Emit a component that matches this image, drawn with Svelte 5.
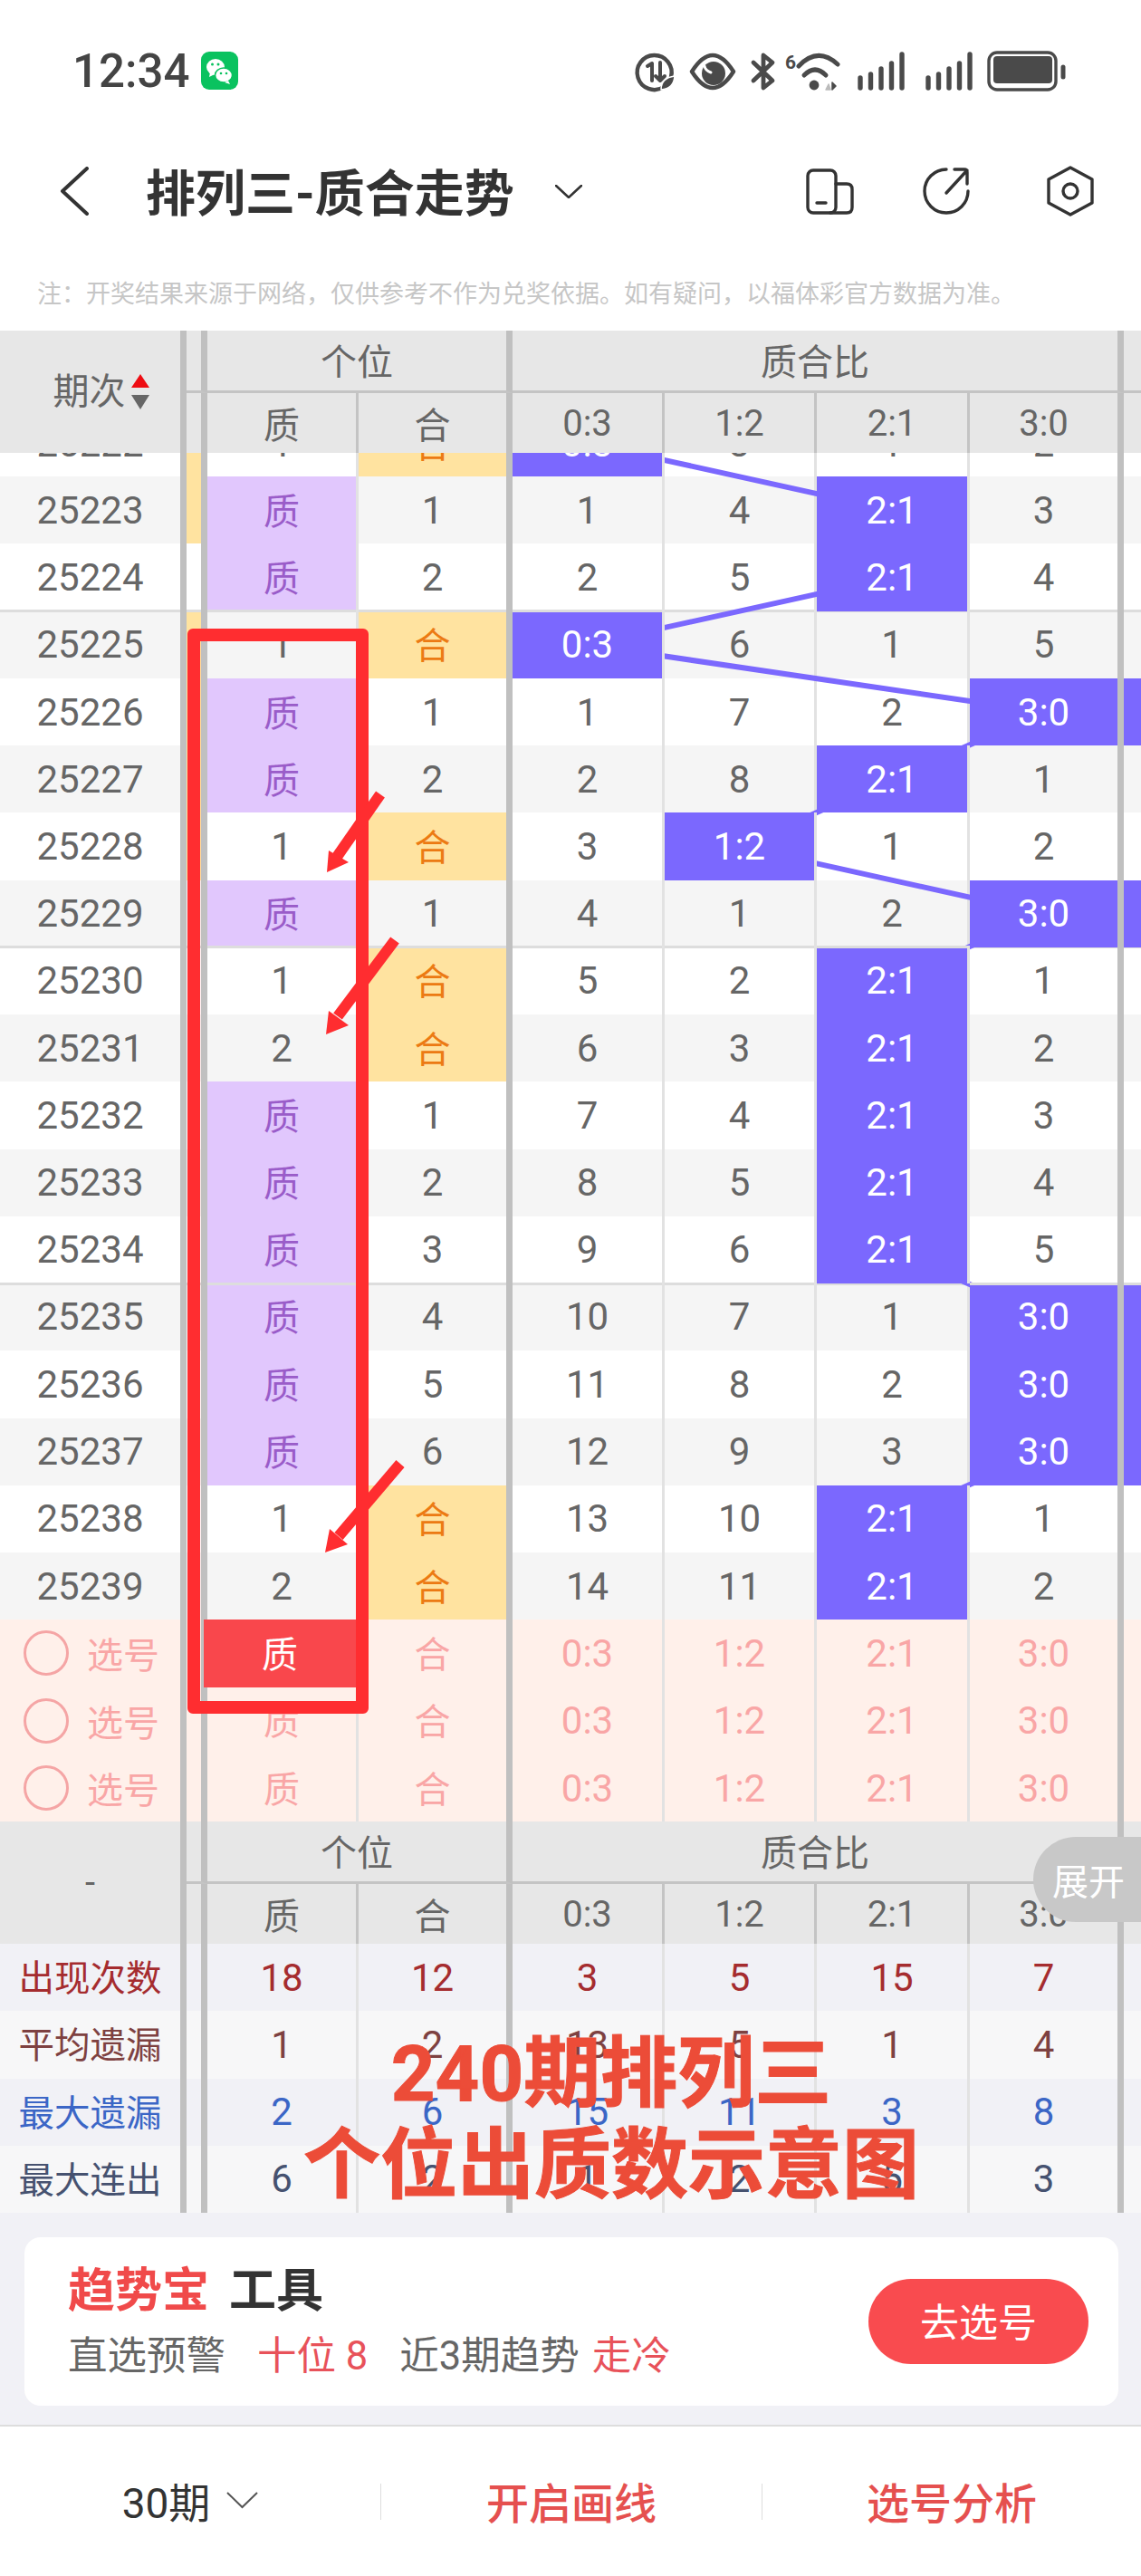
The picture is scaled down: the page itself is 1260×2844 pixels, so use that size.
<script>
  const CX = [648, 817, 985, 1153];
  const ROW_H = 74.24;

  // period, 质 value, 合 value, ratio slots; hot = index of the drawn ratio
  const rows = [
    { p: 25222, v: '1', hit: 'he', r: [0, 3, 1, 2], hot: 0, side: true },
    { p: 25223, v: '1', hit: 'zhi', r: [1, 4, 0, 3], hot: 2, side: true },
    { p: 25224, v: '2', hit: 'zhi', r: [2, 5, 0, 4], hot: 2 },
    { p: 25225, v: '1', hit: 'he', r: [0, 6, 1, 5], hot: 0, side: true, sep: true },
    { p: 25226, v: '1', hit: 'zhi', r: [1, 7, 2, 0], hot: 3, side: true },
    { p: 25227, v: '2', hit: 'zhi', r: [2, 8, 0, 1], hot: 2, side: true },
    { p: 25228, v: '1', hit: 'he', r: [3, 0, 1, 2], hot: 1, side: true },
    { p: 25229, v: '1', hit: 'zhi', r: [4, 1, 2, 0], hot: 3 },
    { p: 25230, v: '1', hit: 'he', r: [5, 2, 0, 1], hot: 2, sep: true },
    { p: 25231, v: '2', hit: 'he', r: [6, 3, 0, 2], hot: 2 },
    { p: 25232, v: '1', hit: 'zhi', r: [7, 4, 0, 3], hot: 2 },
    { p: 25233, v: '2', hit: 'zhi', r: [8, 5, 0, 4], hot: 2 },
    { p: 25234, v: '3', hit: 'zhi', r: [9, 6, 0, 5], hot: 2 },
    { p: 25235, v: '4', hit: 'zhi', r: [10, 7, 1, 0], hot: 3, sep: true },
    { p: 25236, v: '5', hit: 'zhi', r: [11, 8, 2, 0], hot: 3 },
    { p: 25237, v: '6', hit: 'zhi', r: [12, 9, 3, 0], hot: 3 },
    { p: 25238, v: '1', hit: 'he', r: [13, 10, 0, 1], hot: 2 },
    { p: 25239, v: '2', hit: 'he', r: [14, 11, 0, 2], hot: 2 }
  ];

  const ratios = ['0:3', '1:2', '2:1', '3:0'];

  const stats = [
    { label: '出现次数', cls: 's-red', vals: [18, 12, 3, 5, 15, 7] },
    { label: '平均遗漏', cls: 's-brown', vals: [1, 2, 13, 5, 1, 4] },
    { label: '最大遗漏', cls: 's-blue', vals: [2, 6, 15, 11, 3, 8] },
    { label: '最大连出', cls: 's-navy', vals: [6, 2, 1, 2, 5, 3] }
  ];

  // trend line through the hot cells, body top sits at y=500 and row 0 at -48
  const trend = rows
    .map((row, i) => `${CX[row.hot]},${-48 + ROW_H * (i + 0.5)}`)
    .join(' ');
</script>

{#snippet head(corner)}
  <div class="head">
    <div class="h-corner">{@render corner()}</div>
    <div class="h-side"></div>
    <div class="h-group g2"><span>个位</span></div>
    <div class="h-group g4"><span>质合比</span></div>
    <div class="h-end"></div>
    <div class="h-low"></div>
    <div class="h-cell thin">质</div>
    <div class="h-cell thick">合</div>
    {#each ratios as label, i}
      <div class="h-cell" class:thin={i < 3} class:thick={i === 3}>{label}</div>
    {/each}
    <div class="h-cell"></div>
  </div>
{/snippet}

{#snippet sortCorner()}
  <span class="corner-text">期次</span>
  <svg class="sort" width="20" height="40" viewBox="0 0 20 40">
    <polygon points="10,0 20,15 0,15" fill="#ee0c12" />
    <polygon points="0,23 20,23 10,39" fill="#666" />
  </svg>
{/snippet}

{#snippet dashCorner()}
  <span class="corner-text dash">-</span>
{/snippet}

<div class="page">
  <div class="status">
    <span class="time">12:34</span>
    <svg class="wechat" width="41" height="42" viewBox="0 0 41 42">
      <rect width="41" height="42" rx="9" fill="#0ac25f" />
      <ellipse cx="16" cy="17" rx="10" ry="9" fill="#fff" />
      <path d="M10 23l-1 5 6-3z" fill="#fff" />
      <ellipse cx="25" cy="26" rx="9.5" ry="8" fill="#fff" stroke="#0ac25f" stroke-width="1.5" />
      <path d="M30 32l2 4-6-2z" fill="#fff" />
      <circle cx="12.5" cy="14" r="1.5" fill="#0ac25f" />
      <circle cx="19" cy="14" r="1.5" fill="#0ac25f" />
      <circle cx="22" cy="24" r="1.3" fill="#0ac25f" />
      <circle cx="28" cy="24" r="1.3" fill="#0ac25f" />
    </svg>
    <svg class="sys" width="490" height="55" viewBox="695 50 490 55" fill="none" stroke="#4a4a4a" stroke-linecap="round" stroke-linejoin="round">
      <path d="M733 95A19 19 0 1 1 741 84" stroke-width="4.4" />
      <path d="M715 72l5-3v19M729 68v20M724 83l5 5 5-5" stroke-width="4" />
      <path d="M730 98q0-13 15-15q-1 14-15 15z" fill="#4a4a4a" stroke="#fff" stroke-width="1.5" />
      <path d="M764 78Q787 42 810 78Q787 114 764 78Z" stroke-width="4.5" />
      <circle cx="788" cy="80" r="13" fill="#4a4a4a" stroke="none" />
      <path d="M778 72q1 5 7 7" stroke="#fff" stroke-width="3" />
      <path d="M832 68L853 88L843 96V60L853 68L832 88" stroke-width="4.8" />
      <text x="867" y="75" class="six" fill="#4a4a4a" stroke="none">6</text>
      <path d="M882 72Q903 50 925 70" stroke-width="5" />
      <path d="M888 82Q900 70 912 82" stroke-width="5" />
      <circle cx="899" cy="93" r="5.4" fill="#4a4a4a" stroke="none" />
      <path d="M912 98l3-6 2 6z" fill="#bbb" stroke="#bbb" stroke-width="1.5" />
      <path d="M919 90l4 4-4 4z" fill="#4a4a4a" stroke="#4a4a4a" stroke-width="1.5" />
      {#each [947, 1022] as sx}
        {#each [85, 81, 75, 69, 59] as top, i}
          <path d="M{sx + 3 + i * 11.5} {top}V96" stroke-width="5.4" />
        {/each}
      {/each}
      <rect x="1092" y="57" width="74" height="41" rx="9" stroke-width="3.4" />
      <rect x="1097" y="61" width="65" height="30" rx="4" fill="#4a4a4a" stroke="none" />
      <path d="M1174 73V84" stroke-width="5" />
    </svg>
  </div>

  <div class="nav">
    <svg class="back" width="32" height="54" viewBox="0 0 32 54" fill="none" stroke="#333" stroke-width="4" stroke-linecap="round" stroke-linejoin="round">
      <path d="M30 2L3 27l27 25" />
    </svg>
    <h1>排列三-质合走势</h1>
    <svg class="caret" width="30" height="15" viewBox="0 0 30 15" fill="none" stroke="#333" stroke-width="2.6" stroke-linecap="round">
      <path d="M1 1l14 13L29 1" />
    </svg>
    <svg class="tools" width="340" height="75" viewBox="880 175 340 75" fill="none" stroke="#333" stroke-width="3.4" stroke-linecap="round" stroke-linejoin="round">
      <rect x="892" y="189" width="31" height="47" rx="6" />
      <path d="M923 204h12q6 0 6 6v20q0 6-6 6h-18" />
      <path d="M902 225h10" />
      <path d="M1045 188A24 24 0 1 0 1069 212" />
      <path d="M1054 188h11q3 0 3 3v13M1045 214l23-25" />
      <path d="M1182 186L1206 199V225L1182 238L1158 225V199Z" />
      <circle cx="1182" cy="212" r="8" />
    </svg>
  </div>

  <p class="note">注：开奖结果来源于网络，仅供参考不作为兑奖依据。如有疑问，以福体彩官方数据为准。</p>

  {@render head(sortCorner)}

  <div class="body">
    <svg class="trend" width="1260" height="1511" viewBox="0 0 1260 1511" fill="none">
      <polyline points={trend} stroke="#7b68fe" stroke-width="6" />
    </svg>

    {#each rows as row, i}
      <div class="row" class:alt={i % 2 === 1} class:first={i === 0} class:sep={row.sep}>
        <div class="c thick">{row.p}</div>
        <div class="c thick" class:side={row.side}></div>
        <div class="c thin" class:zhi={row.hit === 'zhi'}>{row.hit === 'zhi' ? '质' : row.v}</div>
        <div class="c thick" class:he={row.hit === 'he'}>{row.hit === 'he' ? '合' : row.v}</div>
        {#each row.r as val, k}
          <div class="c" class:thin={k < 3} class:thick={k === 3} class:hot={k === row.hot}>
            {k === row.hot ? ratios[k] : val}
          </div>
        {/each}
        <div class="c" class:hot={row.hot === 3}></div>
      </div>
    {/each}

    {#each [0, 1, 2] as i}
      <div class="row pick">
        <div class="c thick pick-label"><span class="ring"></span>选号</div>
        <div class="c thick"></div>
        <div class="c thin hanzi" class:chosen={i === 0}>质</div>
        <div class="c thick hanzi">合</div>
        {#each ratios as label, k}
          <div class="c" class:thin={k < 3} class:thick={k === 3}>{label}</div>
        {/each}
        <div class="c"></div>
      </div>
    {/each}
  </div>

  <div class="foot-head">
    {@render head(dashCorner)}
    <div class="expand">展开</div>
  </div>

  <div class="stats">
    {#each stats as stat, i}
      <div class="row stat {stat.cls}" class:alt={i % 2 === 1}>
        <div class="c thick stat-label">{stat.label}</div>
        <div class="c thick"></div>
        {#each stat.vals as val, k}
          <div class="c" class:thin={k === 0 || (k > 1 && k < 5)} class:thick={k === 1 || k === 5}>{val}</div>
        {/each}
        <div class="c"></div>
      </div>
    {/each}
    <div class="caption">
      <div>240期排列三</div>
      <div class="caption-2">个位出质数示意图</div>
    </div>
  </div>

  <div class="promo">
    <div class="card">
      <div class="card-text">
        <div class="card-title"><span class="red">趋势宝</span><span>工具</span></div>
        <div class="card-sub">
          <span>直选预警</span>
          <span class="accent m1">十位 8</span>
          <span class="m1">近3期趋势</span>
          <span class="accent m2">走冷</span>
        </div>
      </div>
      <div class="go">去选号</div>
    </div>
  </div>

  <div class="tabbar">
    <div class="tab plain">
      30期
      <svg width="35" height="19" viewBox="0 0 35 19" fill="none" stroke="#555" stroke-width="2">
        <path d="M1 1l16.5 16L34 1" />
      </svg>
    </div>
    <div class="tab">开启画线</div>
    <div class="tab">选号分析</div>
  </div>

  <div class="redbox"></div>
  <svg class="arrows" width="1260" height="1800" viewBox="0 0 1260 1800" fill="#ff2d30" stroke="none">
    <path d="M420 877L372 946" stroke="#ff2d30" stroke-width="12" />
    <polygon points="363,939 361,963 385,952" />
    <path d="M436 1038L373 1122" stroke="#ff2d30" stroke-width="12" />
    <polygon points="363,1116 360,1142 385,1132" />
    <path d="M442 1616L374 1696" stroke="#ff2d30" stroke-width="12" />
    <polygon points="364,1688 359,1714 384,1705" />
  </svg>
</div>

<style>
  :global(body) {
    margin: 0;
    background: #fff;
  }

  .page {
    --cols: 206px 23px 167px 170px 168px 168px 169px 170px 19px;
    position: relative;
    width: 1260px;
    height: 2844px;
    overflow: hidden;
    font-family: Roboto, "Noto Sans CJK SC", sans-serif;
    color: #666;
  }

  .status {
    display: flex;
    align-items: center;
    height: 156px;
    box-sizing: border-box;
    padding: 0 75px 0 80px;
  }
  .time {
    font-size: 51px;
    font-weight: 500;
    color: #444;
    width: 127px;
  }
  .wechat {
    margin-left: 15px;
  }
  .sys {
    margin-left: auto;
  }
  .six {
    font: 700 21px Roboto, sans-serif;
  }

  .nav {
    display: flex;
    align-items: center;
    height: 110px;
    padding: 0 40px 0 66px;
  }
  .nav h1 {
    margin: 0 0 4px 63px;
    font-size: 55px;
    font-weight: 700;
    color: #333;
    white-space: nowrap;
    width: 403px;
  }
  .caret {
    margin-left: 49px;
  }
  .tools {
    margin-left: auto;
  }

  .note {
    margin: 0;
    height: 99px;
    box-sizing: border-box;
    padding: 39px 0 0 41px;
    font-size: 27px;
    line-height: 40px;
    color: #c6c6c6;
    white-space: nowrap;
  }

  .head {
    display: grid;
    grid-template-columns: var(--cols);
    grid-template-rows: 69px 66px;
    height: 135px;
    background: #e7e7e7;
    font-size: 40px;
    color: #666;
  }
  .head > div {
    display: flex;
    align-items: center;
    justify-content: center;
    box-sizing: border-box;
  }
  .h-corner {
    grid-row: 1 / 3;
    border-right: 7px solid #c0c0c0;
    padding-left: 24px;
    gap: 6px;
  }
  .corner-text {
    line-height: 1;
  }
  .dash {
    margin-left: -24px;
  }
  .h-side {
    border-right: 7px solid #c0c0c0;
    border-bottom: 3px solid #c4c4c4;
  }
  .h-low {
    border-right: 7px solid #c0c0c0;
  }
  .h-group {
    border-bottom: 3px solid #c4c4c4;
    border-right: 7px solid #c0c0c0;
    padding-bottom: 3px;
  }
  .g2 {
    grid-column: span 2;
  }
  .g4 {
    grid-column: span 4;
  }
  .h-end {
    border-bottom: 3px solid #c4c4c4;
  }
  .head > .h-cell.thin {
    border-right: 3px solid #c4c4c4;
  }
  .head > .h-cell.thick {
    border-right: 7px solid #c0c0c0;
  }

  .body {
    position: relative;
    height: 1511px;
    overflow: hidden;
  }
  .trend {
    position: absolute;
    left: 0;
    top: 0;
    z-index: 1;
  }

  .row {
    display: grid;
    grid-template-columns: var(--cols);
    height: 74.24px;
    background: #fff;
    font-size: 42px;
    color: #666;
  }
  .row.first {
    margin-top: -48px;
  }
  .row.alt {
    background: #f5f5f5;
  }
  .row.sep {
    margin-top: -1.5px;
    height: 75.74px;
  }
  .row.sep .c {
    box-shadow: inset 0 3px 0 #dddddd;
  }

  .c {
    display: flex;
    align-items: center;
    justify-content: center;
    box-sizing: border-box;
    min-width: 0;
  }
  .thin {
    border-right: 3px solid #e2e2e2;
  }
  .thick {
    border-right: 7px solid #c0c0c0;
  }
  .side {
    background: #ffe3a0;
  }
  .zhi {
    background: #e1c7fd;
    color: #9a5cc9;
    font-size: 40px;
    padding-bottom: 3px;
  }
  .he {
    background: #ffe3a0;
    color: #ec7a13;
    font-size: 40px;
    padding-bottom: 3px;
  }
  .hot {
    position: relative;
    z-index: 2;
    background: #7b68fe;
    color: #fff;
  }

  .pick {
    height: 74.33px;
    background: #fff0ea;
    color: #f9a6a6;
    font-size: 42px;
  }
  .hanzi {
    font-size: 40px;
    padding-bottom: 3px;
  }
  .pick-label {
    justify-content: flex-start;
    padding: 0 0 0 26px;
    gap: 20px;
    font-size: 40px;
  }
  .ring {
    width: 50px;
    height: 50px;
    box-sizing: border-box;
    border: 3px solid #f5a5a5;
    border-radius: 50%;
  }
  .chosen {
    position: relative;
    z-index: 2;
    margin-left: -4px;
    background: #f9474c;
    color: #fff;
  }

  .foot-head {
    position: relative;
  }
  .expand {
    position: absolute;
    top: 17px;
    right: 0;
    width: 119px;
    height: 94px;
    box-sizing: border-box;
    padding-left: 21px;
    display: flex;
    align-items: center;
    border-radius: 47px 0 0 47px;
    background: #c8c8c8;
    color: #fff;
    font-size: 40px;
  }

  .stats {
    position: relative;
  }
  .stat {
    height: 74.25px;
    background: #f1f1f6;
  }
  .stat.alt {
    background: #f7f7f8;
  }
  .stat-label {
    font-size: 39.5px;
    padding-bottom: 5px;
  }
  .s-red {
    color: #a52c2f;
  }
  .s-brown {
    color: #7e4141;
  }
  .s-blue {
    color: #3b66c6;
  }
  .s-navy {
    color: #465270;
  }
  .caption {
    position: absolute;
    top: 96px;
    left: 90px;
    right: 0;
    text-align: center;
    font-size: 85px;
    font-weight: 700;
    line-height: 96px;
    color: #ec4c38;
    white-space: nowrap;
    -webkit-text-stroke: 1px #ec4c38;
  }
  .caption-2 {
    margin-top: 5px;
  }

  .promo {
    height: 236px;
    box-sizing: border-box;
    padding: 27px 25px 21px 27px;
    background: #f1f1f6;
    border-bottom: 2px solid #dddddd;
  }
  .card {
    display: flex;
    align-items: center;
    justify-content: space-between;
    height: 186px;
    box-sizing: border-box;
    padding: 0 33px 0 48px;
    border-radius: 18px;
    background: #fff;
  }
  .card-title {
    display: flex;
    gap: 22px;
    margin-top: 5px;
    font-size: 52px;
    font-weight: 700;
    line-height: 54px;
    color: #333;
  }
  .red {
    color: #f04a4a;
  }
  .card-sub {
    display: flex;
    margin-top: 18px;
    font-size: 43.5px;
    line-height: 54px;
    color: #666;
    white-space: nowrap;
  }
  .accent {
    color: #e8525a;
  }
  .m1 {
    margin-left: 35px;
  }
  .m2 {
    margin-left: 14px;
  }
  .go {
    display: flex;
    align-items: center;
    justify-content: center;
    width: 243px;
    height: 94px;
    box-sizing: border-box;
    padding-bottom: 5px;
    border-radius: 47px;
    background: #f94b4f;
    color: #fff;
    font-size: 43px;
  }

  .tabbar {
    display: grid;
    grid-template-columns: 421px 421px 418px;
    height: 165px;
    padding-top: 63px;
    box-sizing: border-box;
    align-items: start;
  }
  .tab {
    display: flex;
    align-items: center;
    justify-content: center;
    gap: 18px;
    height: 40px;
    box-sizing: border-box;
    padding-bottom: 4px;
    border-right: 1px solid #dddddd;
    font-size: 47px;
    font-weight: 500;
    color: #e5504f;
  }
  .tab:last-child {
    border-right: 0;
  }
  .tab.plain {
    font-weight: 400;
    font-size: 46px;
    color: #333;
  }

  .redbox {
    position: absolute;
    left: 207px;
    top: 694px;
    width: 200px;
    height: 1198px;
    box-sizing: border-box;
    border: 14px solid #ff2d30;
    border-radius: 6px;
    z-index: 5;
  }
  .arrows {
    position: absolute;
    left: 0;
    top: 0;
    z-index: 6;
    pointer-events: none;
  }
</style>
